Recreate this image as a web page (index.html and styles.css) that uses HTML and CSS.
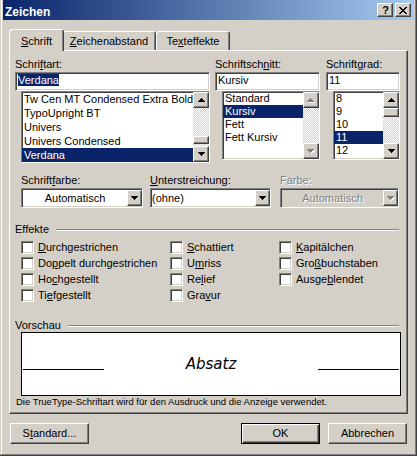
FILE: index.html
```html
<!DOCTYPE html>
<html lang="de">
<head>
<meta charset="utf-8">
<title>Zeichen</title>
<link rel="stylesheet" href="styles.css">
</head>
<body>
<div class="window">
  <div class="titlebar">
    <span class="title">Zeichen</span>
    <div class="tbtns">
      <span class="tbtn help">?</span>
      <span class="tbtn close"><svg width="8" height="7" viewBox="0 0 8 7" shape-rendering="crispEdges"><path d="M0 0h2v1H0zM6 0h2v1H6zM1 1h2v1H1zM5 1h2v1H5zM2 2h4v1H2zM3 3h2v1H3zM2 4h4v1H2zM1 5h2v1H1zM5 5h2v1H5zM0 6h2v1H0zM6 6h2v1H6z"/></svg></span>
    </div>
  </div>

  <div class="main">
    <div class="tabs">
      <div class="tab active t1"><u>S</u>chrift</div>
      <div class="tab t2"><u>Z</u>eichenabstand</div>
      <div class="tab t3">Te<u>x</u>teffekte</div>
    </div>

    <div class="panel">
      <div class="fontrow">
        <div class="fcol c1">
          <div class="lbl">Schri<u>f</u>tart:</div>
          <div class="field sunken"><span class="sel">Verdana</span></div>
          <div class="list l1 sunken">
            <ul class="items">
              <li>Tw Cen MT Condensed Extra Bold</li>
              <li>TypoUpright BT</li>
              <li>Univers</li>
              <li>Univers Condensed</li>
              <li class="on">Verdana</li>
            </ul>
            <div class="sb">
              <span class="sbtn raised"><svg width="7" height="4" viewBox="0 0 7 4" shape-rendering="crispEdges"><path d="M3 0h1v1H3zM2 1h3v1H2zM1 2h5v1H1zM0 3h7v1H0z"/></svg></span>
              <div class="track"><span class="thumb raised th1"></span></div>
              <span class="sbtn raised"><svg width="7" height="4" viewBox="0 0 7 4" shape-rendering="crispEdges"><path d="M0 0h7v1H0zM1 1h5v1H1zM2 2h3v1H2zM3 3h1v1H3z"/></svg></span>
            </div>
          </div>
        </div>

        <div class="fcol c2">
          <div class="lbl">Schriftsch<u>n</u>itt:</div>
          <div class="field sunken"><span>Kursiv</span></div>
          <div class="list l2 sunken">
            <ul class="items">
              <li>Standard</li>
              <li class="on">Kursiv</li>
              <li>Fett</li>
              <li>Fett Kursiv</li>
            </ul>
            <div class="sb">
              <span class="sbtn raised"><svg width="8" height="5" viewBox="0 0 8 5" shape-rendering="crispEdges"><path fill="#fff" d="M4 1h1v1H4zM3 2h3v1H3zM2 3h5v1H2zM1 4h7v1H1z"/><path fill="#808080" d="M3 0h1v1H3zM2 1h3v1H2zM1 2h5v1H1zM0 3h7v1H0z"/></svg></span>
              <div class="track"></div>
              <span class="sbtn raised"><svg width="8" height="5" viewBox="0 0 8 5" shape-rendering="crispEdges"><path fill="#fff" d="M1 1h7v1H1zM2 2h5v1H2zM3 3h3v1H3zM4 4h1v1H4z"/><path fill="#808080" d="M0 0h7v1H0zM1 1h5v1H1zM2 2h3v1H2zM3 3h1v1H3z"/></svg></span>
            </div>
          </div>
        </div>

        <div class="fcol c3">
          <div class="lbl">Schrift<u>g</u>rad:</div>
          <div class="field sunken"><span>11</span></div>
          <div class="list l3 sunken">
            <ul class="items">
              <li>8</li>
              <li>9</li>
              <li>10</li>
              <li class="on">11</li>
              <li>12</li>
            </ul>
            <div class="sb">
              <span class="sbtn raised"><svg width="7" height="4" viewBox="0 0 7 4" shape-rendering="crispEdges"><path d="M3 0h1v1H3zM2 1h3v1H2zM1 2h5v1H1zM0 3h7v1H0z"/></svg></span>
              <div class="track"><span class="thumb raised th3"></span></div>
              <span class="sbtn raised"><svg width="7" height="4" viewBox="0 0 7 4" shape-rendering="crispEdges"><path d="M0 0h7v1H0zM1 1h5v1H1zM2 2h3v1H2zM3 3h1v1H3z"/></svg></span>
            </div>
          </div>
        </div>
      </div>

      <div class="comborow">
        <div class="ccol cc1">
          <div class="lbl">Schrift<u>f</u>arbe:</div>
          <div class="combo sunken">
            <span class="ctext center">Automatisch</span>
            <span class="cbtn raised"><svg width="7" height="4" viewBox="0 0 7 4" shape-rendering="crispEdges"><path d="M0 0h7v1H0zM1 1h5v1H1zM2 2h3v1H2zM3 3h1v1H3z"/></svg></span>
          </div>
        </div>
        <div class="ccol cc2">
          <div class="lbl"><u>U</u>nterstreichung:</div>
          <div class="combo sunken">
            <span class="ctext">(ohne)</span>
            <span class="cbtn raised"><svg width="7" height="4" viewBox="0 0 7 4" shape-rendering="crispEdges"><path d="M0 0h7v1H0zM1 1h5v1H1zM2 2h3v1H2zM3 3h1v1H3z"/></svg></span>
          </div>
        </div>
        <div class="ccol cc3">
          <div class="lbl dis">Farbe:</div>
          <div class="combo sunken disabled">
            <span class="ctext center dis">Automatisch</span>
            <span class="cbtn raised"><svg width="8" height="5" viewBox="0 0 8 5" shape-rendering="crispEdges"><path fill="#fff" d="M1 1h7v1H1zM2 2h5v1H2zM3 3h3v1H3zM4 4h1v1H4z"/><path fill="#808080" d="M0 0h7v1H0zM1 1h5v1H1zM2 2h3v1H2zM3 3h1v1H3z"/></svg></span>
          </div>
        </div>
      </div>

      <div class="grp g-eff">
        <span>Effekte</span>
        <span class="rule"></span>
      </div>

      <div class="checks">
        <div class="chk"><span class="box sunken"></span><span><u>D</u>urchgestrichen</span></div>
        <div class="chk"><span class="box sunken"></span><span><u>S</u>chattiert</span></div>
        <div class="chk"><span class="box sunken"></span><span><u>K</u>apitälchen</span></div>
        <div class="chk"><span class="box sunken"></span><span>Do<u>p</u>pelt durchgestrichen</span></div>
        <div class="chk"><span class="box sunken"></span><span>U<u>m</u>riss</span></div>
        <div class="chk"><span class="box sunken"></span><span>Gro<u>ß</u>buchstaben</span></div>
        <div class="chk"><span class="box sunken"></span><span>Ho<u>c</u>hgestellt</span></div>
        <div class="chk"><span class="box sunken"></span><span>Re<u>l</u>ief</span></div>
        <div class="chk"><span class="box sunken"></span><span>Ausge<u>b</u>lendet</span></div>
        <div class="chk"><span class="box sunken"></span><span>Ti<u>e</u>fgestellt</span></div>
        <div class="chk"><span class="box sunken"></span><span>Gra<u>v</u>ur</span></div>
      </div>

      <div class="grp g-pre">
        <span>Vorschau</span>
        <span class="rule"></span>
      </div>

      <div class="preview">
        <span class="pline"></span>
        <span class="sample">Absatz</span>
        <span class="pline"></span>
      </div>
      <div class="note">Die TrueType-Schriftart wird für den Ausdruck und die Anzeige verwendet.</div>
    </div>

    <div class="buttons">
      <div class="btn raised">S<u>t</u>andard...</div>
      <div class="btn def ok">OK</div>
      <div class="btn raised cancel">Abbrechen</div>
    </div>
  </div>
</div>
</body>
</html>
```

FILE: styles.css
```css
* { box-sizing: border-box; }
html, body { margin: 0; padding: 0; }
body {
  width: 417px;
  height: 456px;
  overflow: hidden;
  background: #d4d0c8;
  font-family: "Liberation Sans", Arial, sans-serif;
  font-size: 11px;
  line-height: 13px;
  color: #000;
}
u { text-decoration: underline; text-underline-offset: 1px; }

.sunken {
  border: 1px solid;
  border-color: #808080 #fff #fff #808080;
  box-shadow: inset 1px 1px #404040, inset -1px -1px #d4d0c8;
}
.raised {
  background: #d4d0c8;
  border: 1px solid;
  border-color: #fff #404040 #404040 #fff;
  box-shadow: inset -1px -1px #808080;
}

.window {
  width: 417px;
  height: 456px;
  padding: 0 3px 3px 3px;
  display: flex;
  flex-direction: column;
  box-shadow: inset -1px -1px #404040, inset 1px 0 #d4d0c8, inset -2px -2px #808080, inset 2px 0 #fff;
}

/* title bar */
.titlebar {
  height: 20px;
  flex: none;
  display: flex;
  align-items: flex-start;
  justify-content: space-between;
  padding: 0 3px 0 2px;
  background: linear-gradient(to right, #0a246a, #a6caf0);
}
.title {
  margin-top: 5px;
  color: #fff;
  font-weight: bold;
  font-size: 12px;
  line-height: 14px;
}
.tbtns { display: flex; gap: 2px; margin-top: 3px; }
.tbtn {
  width: 16px;
  height: 14px;
  display: flex;
  align-items: center;
  justify-content: center;
  background: #d4d0c8;
  border: 1px solid;
  border-color: #fff #404040 #404040 #fff;
  box-shadow: inset -1px -1px #808080;
}
.help { font-weight: bold; font-size: 11px; line-height: 12px; padding-left: 1px; }

/* main */
.main {
  flex: 1;
  display: flex;
  flex-direction: column;
  padding: 9px 6px 0 6px;
}

.tabs {
  display: flex;
  align-items: flex-end;
  height: 21px;
  padding-left: 2px;
  flex: none;
}
.tab {
  height: 19px;
  padding-top: 3px;
  text-align: center;
  white-space: nowrap;
  background: #d4d0c8;
  border: 1px solid;
  border-bottom: 0;
  border-color: #fff #404040 transparent #fff;
  border-radius: 3px 3px 0 0;
  box-shadow: inset -1px 0 #808080;
}
.tab.active {
  height: 22px;
  padding-top: 5px;
  margin: 0 -2px -1px -2px;
  position: relative;
  z-index: 1;
}
.t1 { width: 55px; }
.t2 { width: 94px; }
.t3 { width: 74px; }

.panel {
  height: 364px;
  flex: none;
  border: 1px solid;
  border-color: #fff #404040 #404040 #fff;
  box-shadow: inset -1px -1px #808080;
  padding: 7px 7px 0 5px;
}

/* font row */
.fontrow { display: flex; align-items: flex-start; }
.c1 { width: 195px; margin-right: 5px; }
.c2 { width: 105px; margin-right: 6px; }
.c3 { width: 74px; }
.lbl { height: 13px; margin-bottom: 1px; white-space: nowrap; }
.field {
  height: 19px;
  background: #fff;
  padding: 0 2px;
  line-height: 15px;
  white-space: nowrap;
}
.sel { background: #0a246a; color: #fff; }

.list { display: flex; background: #fff; }
.l1 { height: 72px; margin-left: 6px; }
.l2 { height: 69px; margin-left: 7px; }
.l3 { height: 69px; margin-left: 7px; }
.items {
  flex: 1;
  list-style: none;
  margin: 0;
  padding: 0;
  overflow: hidden;
}
.items li { white-space: nowrap; padding-left: 2px; }
.l1 li { height: 14px; line-height: 14px; }
.l2 li, .l3 li { height: 13px; line-height: 13px; }
.items li.on { background: #0a246a; color: #fff; }

.sb {
  width: 16px;
  flex: none;
  display: flex;
  flex-direction: column;
}
.sbtn {
  height: 16px;
  flex: none;
  display: flex;
  align-items: center;
  justify-content: center;
}
.track {
  flex: 1;
  display: flex;
  flex-direction: column;
  background: repeating-conic-gradient(#fff 0 25%, #d4d0c8 0 50%) 0 0 / 2px 2px;
}
.thumb { display: block; width: 16px; }
.th1 { height: 8px; margin-top: 28px; }
.th3 { height: 9px; }

/* combo row */
.comborow { display: flex; margin-top: 11px; margin-left: 6px; }
.cc1 { width: 122px; margin-right: 7px; }
.cc2 { width: 121px; margin-right: 9px; }
.cc3 { width: 119px; }
.combo {
  height: 20px;
  display: flex;
  align-items: center;
  background: #fff;
}
.combo.disabled { background: #d4d0c8; }
.ctext { flex: 1; line-height: 16px; padding-left: 1px; white-space: nowrap; }
.ctext.center { text-align: center; }
.cbtn {
  width: 15px;
  height: 16px;
  flex: none;
  display: flex;
  align-items: center;
  justify-content: center;
}
.dis { color: #808080; text-shadow: 1px 1px 0 #fff; }

/* group headers */
.grp {
  display: flex;
  align-items: center;
  margin-right: 1px;
  white-space: nowrap;
}
.g-eff { margin-top: 15px; }
.g-pre { margin-top: 14px; }
.rule {
  flex: 1;
  margin-left: 7px;
  height: 2px;
  border-top: 1px solid #808080;
  border-bottom: 1px solid #fff;
}

/* checkboxes */
.checks {
  display: grid;
  grid-template-columns: 149px 109px 1fr;
  grid-auto-rows: 16px;
  margin: 5px 0 0 6px;
}
.chk { display: flex; align-items: flex-start; white-space: nowrap; }
.box {
  width: 13px;
  height: 13px;
  flex: none;
  background: #fff;
  margin-right: 4px;
}

/* preview */
.preview {
  height: 64px;
  width: 380px;
  margin-left: 6px;
  background: #fff;
  border: 1px solid #000;
  display: flex;
  align-items: center;
  justify-content: space-between;
  padding: 0 1px;
}
.pline {
  width: 81px;
  height: 1px;
  margin-top: 10px;
  background: #000;
}
.sample {
  font-family: "DejaVu Sans", Verdana, sans-serif;
  font-style: italic;
  font-size: 15px;
  line-height: 18px;
}
.note {
  margin-left: 1px;
  font-size: 9.5px;
  line-height: 12px;
  white-space: nowrap;
}

/* buttons */
.buttons {
  display: flex;
  margin-top: 9px;
  padding: 0 1px;
}
.btn {
  width: 79px;
  height: 21px;
  line-height: 19px;
  text-align: center;
  white-space: nowrap;
}
.btn.def {
  background: #d4d0c8;
  border: 1px solid #000;
  box-shadow: inset 1px 1px #fff, inset -1px -1px #404040, inset -2px -2px #808080;
}
.ok { margin-left: auto; }
.cancel { margin-left: 8px; }
```
